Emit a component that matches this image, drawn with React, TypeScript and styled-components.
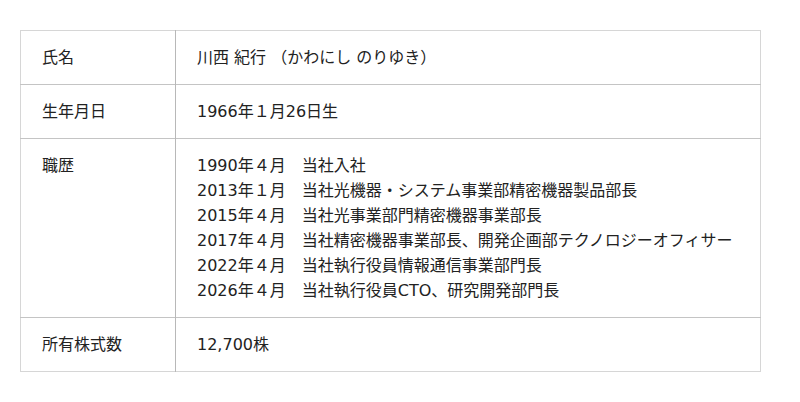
import React from "react";
import styled, { createGlobalStyle } from "styled-components";

const Global = createGlobalStyle`
  html, body { margin: 0; padding: 0; background: #ffffff; }
  body {
    font-family: "DejaVu Sans", "Noto Sans CJK JP", sans-serif;
    color: #222222;
  }
`;

const Page = styled.div`
  padding: 30px 0 0 20px;
`;

const Table = styled.table`
  width: 741px;
  border-collapse: collapse;
  border: 1px solid #d6d6d6;
  font-family: "DejaVu Sans", "Noto Sans CJK JP", sans-serif;
  font-size: 16px;
  line-height: 25px;
  color: #222222;
`;

const Row = styled.tr`
  border-top: 1px solid #c4c4c4;
  &:first-child { border-top: 1px solid #d6d6d6; }
`;

const Label = styled.th`
  width: 133px;
  padding: 14px 0 14px 21px;
  text-align: left;
  vertical-align: top;
  font-weight: normal;
  border-right: 1px solid #b8b8b8;
`;

const Value = styled.td`
  padding: 14px 21px;
  vertical-align: top;
`;

const Career = styled.div`
  display: grid;
  grid-template-columns: auto 1fr;
  column-gap: 16px;
`;

const history: [string, string][] = [
  ["1990年４月", "当社入社"],
  ["2013年１月", "当社光機器・システム事業部精密機器製品部長"],
  ["2015年４月", "当社光事業部門精密機器事業部長"],
  ["2017年４月", "当社精密機器事業部長、開発企画部テクノロジーオフィサー"],
  ["2022年４月", "当社執行役員情報通信事業部門長"],
  ["2026年４月", "当社執行役員CTO、研究開発部門長"],
];

export default function App() {
  return (
    <>
      <Global />
      <Page>
        <Table>
          <tbody>
            <Row>
              <Label>氏名</Label>
              <Value>川西 紀行 （かわにし のりゆき）</Value>
            </Row>
            <Row>
              <Label>生年月日</Label>
              <Value>1966年１月26日生</Value>
            </Row>
            <Row>
              <Label>職歴</Label>
              <Value>
                <Career>
                  {history.map(([d, t]) => (
                    <React.Fragment key={d}>
                      <span>{d}</span>
                      <span>{t}</span>
                    </React.Fragment>
                  ))}
                </Career>
              </Value>
            </Row>
            <Row>
              <Label>所有株式数</Label>
              <Value>12,700株</Value>
            </Row>
          </tbody>
        </Table>
      </Page>
    </>
  );
}
